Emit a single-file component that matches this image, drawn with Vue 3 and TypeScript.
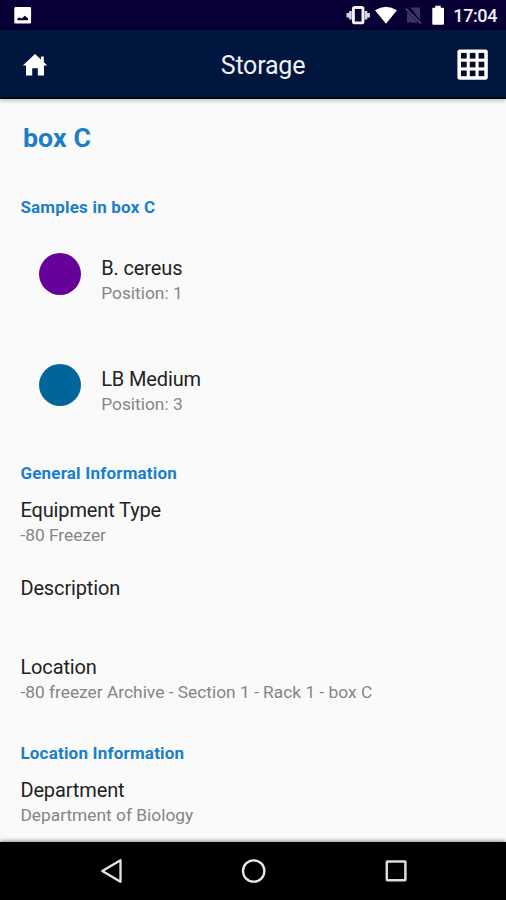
<script setup lang="ts">
interface Sample { name: string; position: number; tone: string }
interface Field { label: string; value: string }
interface Section { title: string; fields: Field[] }

const samples: Sample[] = [
  { name: 'B. cereus', position: 1, tone: 'purple' },
  { name: 'LB Medium', position: 3, tone: 'blue' },
]

const sections: Section[] = [
  {
    title: 'General Information',
    fields: [
      { label: 'Equipment Type', value: '-80 Freezer' },
      { label: 'Description', value: '' },
      { label: 'Location', value: '-80 freezer Archive - Section 1 - Rack 1 - box C' },
    ],
  },
  {
    title: 'Location Information',
    fields: [{ label: 'Department', value: 'Department of Biology' }],
  },
]

const cells = [4, 12.8, 21.6]
</script>

<template>
  <div class="screen">
    <div class="status">
      <svg class="picture" width="18" height="18" viewBox="0 0 18 18">
        <rect x="0.3" y="1.1" width="16.8" height="16.4" rx="1.3" fill="#fff" />
        <path d="M3.3 14.2v-1.4l1.8-1.6 2.4 1.2 3.4-2.6 3.1 2.6v1.8z" fill="#080035" />
      </svg>
      <div class="indicators">
        <svg class="vibrate" width="24" height="20" viewBox="0 0 24 20">
          <path d="M1.8 7.9v4.6M4.4 6v8.4M22.6 7.9v4.6M20 6v8.4" stroke="#d6d4dd" stroke-width="2.6" />
          <rect x="7.4" y="2.5" width="9.6" height="15.4" rx="1.4" fill="none" stroke="#f4f3f6" stroke-width="2.9" />
        </svg>
        <svg class="wifi" width="22" height="18" viewBox="0 0 22 18">
          <path d="M0 4.2Q11-2.8 22 4.2L11 17.8z" fill="#fff" />
        </svg>
        <svg class="signal" width="17" height="18" viewBox="0 0 17 18">
          <path d="M5.5 1.5H15v12.5zM2 5.7L13.2 16.5H2z" fill="#3d3560" />
          <path d="M.7 2.5L16 17.5" stroke="#554d75" stroke-width="1.5" />
        </svg>
        <svg class="battery" width="12" height="20" viewBox="0 0 12 20">
          <path d="M3.3.8h5.4v2h2.3q1 0 1 1v15q0 1-1 1H1.3q-1 0-1-1v-15q0-1 1-1h2z" fill="#fff" />
        </svg>
        <span class="time">17:04</span>
      </div>
    </div>
    <header class="bar">
      <svg width="26" height="22" viewBox="0 0 26 22">
        <path d="M13 0L.8 11.5H4V21.5H10.2V14.3H15.8V21.5H22V11.5H25.3L21.8 8V2.5H19V5.5z" fill="#fff" />
      </svg>
      <h1 class="title">Storage</h1>
      <svg width="32" height="32" viewBox="0 0 32 32">
        <rect x="0.4" y="0.4" width="30.4" height="30.4" rx="2.4" fill="#fff" />
        <template v-for="y in cells" :key="y">
          <rect v-for="x in cells" :key="x" :x="x" :y="y - 0.1" width="5.7" height="5.7" fill="#050d2a" />
        </template>
      </svg>
    </header>
    <main class="content">
      <h2 class="box-name">box C</h2>
      <h3 class="heading">Samples in box C</h3>
      <div class="samples">
        <div v-for="s in samples" :key="s.name" class="sample">
          <span class="dot" :class="s.tone"></span>
          <div class="sample-text">
            <div class="label">{{ s.name }}</div>
            <div class="value">Position: {{ s.position }}</div>
          </div>
        </div>
      </div>
      <section v-for="sec in sections" :key="sec.title" class="section">
        <h3 class="heading">{{ sec.title }}</h3>
        <div class="fields">
          <div v-for="f in sec.fields" :key="f.label">
            <div class="label">{{ f.label }}</div>
            <div class="value">{{ f.value }}</div>
          </div>
        </div>
      </section>
    </main>
    <nav class="nav">
      <svg width="24" height="26" viewBox="0 0 24 26">
        <path d="M20.5 2.2V23.8L2.3 13z" fill="none" stroke="#e6e6e6" stroke-width="2.3" stroke-linejoin="round" />
      </svg>
      <svg width="26" height="26" viewBox="0 0 26 26">
        <circle cx="12.7" cy="13" r="10.7" fill="none" stroke="#e8e8e8" stroke-width="2.3" />
      </svg>
      <svg width="24" height="24" viewBox="0 0 24 24">
        <rect x="2.8" y="2.6" width="18.6" height="18.6" rx=".5" fill="none" stroke="#dcdcdc" stroke-width="2.5" />
      </svg>
    </nav>
  </div>
</template>

<style>
body { margin: 0; }
</style>

<style scoped>
.screen {
  width: 506px;
  height: 900px;
  display: flex;
  flex-direction: column;
  overflow: hidden;
  background: #fafafa;
  font-family: Roboto, "Liberation Sans", sans-serif;
}
h1, h2, h3 { margin: 0; }
svg { display: block; flex: none; }
.status {
  height: 30px;
  flex: none;
  box-sizing: border-box;
  padding: 0 9px 0 14px;
  display: flex;
  align-items: center;
  justify-content: space-between;
  background: #080035;
}
.indicators { display: flex; align-items: center; }
.wifi { margin-left: 5px; }
.signal { margin-left: 8px; }
.battery { margin-left: 10px; }
.time {
  margin-left: 9px;
  color: #f0eff4;
  font-size: 18px;
  font-weight: 500;
  letter-spacing: -0.4px;
  line-height: 30px;
  padding-top: 2px;
}
.bar {
  height: 69px;
  flex: none;
  box-sizing: border-box;
  padding: 0 17px 0 22px;
  display: flex;
  align-items: center;
  background: #00163f;
  border-bottom: 2px solid #050814;
  box-shadow: 0 1px 5px rgba(0, 0, 0, .3);
}
.title {
  flex: 1;
  padding: 5px 0 0 21px;
  text-align: center;
  color: #eef0f4;
  font-size: 25px;
  font-weight: 400;
  letter-spacing: -0.2px;
  line-height: 30px;
}
.bar svg { margin-top: 3px; }
.content {
  flex: 1;
  min-height: 0;
  padding: 23px 20px 0 20.4px;
}
.box-name {
  padding-left: 2.6px;
  color: #1a7fc9;
  font-size: 26.7px;
  font-weight: 700;
  letter-spacing: 0.1px;
  line-height: 32px;
}
.heading {
  color: #1a7fc9;
  font-size: 17px;
  font-weight: 700;
  letter-spacing: 0.2px;
  line-height: 20px;
}
.box-name + .heading { margin-top: 43px; }
.samples {
  margin-top: 35px;
  padding-left: 18.8px;
  display: flex;
  flex-direction: column;
  gap: 51px;
}
.sample { display: flex; height: 60px; gap: 20px; }
.dot {
  width: 42px;
  height: 42px;
  margin-top: 0.6px;
  border-radius: 50%;
}
.purple { background: #660099; }
.blue { background: #006699; }
.sample-text { padding-top: 4px; }
.label {
  color: #222;
  font-size: 20px;
  letter-spacing: -0.13px;
  line-height: 24px;
}
.value {
  height: 26px;
  color: #858585;
  font-size: 17.35px;
  line-height: 26px;
}
.section { margin-top: 40px; }
.section + .section { margin-top: 38.2px; }
.fields {
  margin-top: 15px;
  display: flex;
  flex-direction: column;
  gap: 28.4px;
}
.nav {
  height: 58px;
  flex: none;
  box-sizing: border-box;
  padding: 0 98px 0 100px;
  display: flex;
  align-items: center;
  justify-content: space-between;
  background: #000;
  box-shadow: 0 -1px 4px rgba(0, 0, 0, .45);
}
</style>
